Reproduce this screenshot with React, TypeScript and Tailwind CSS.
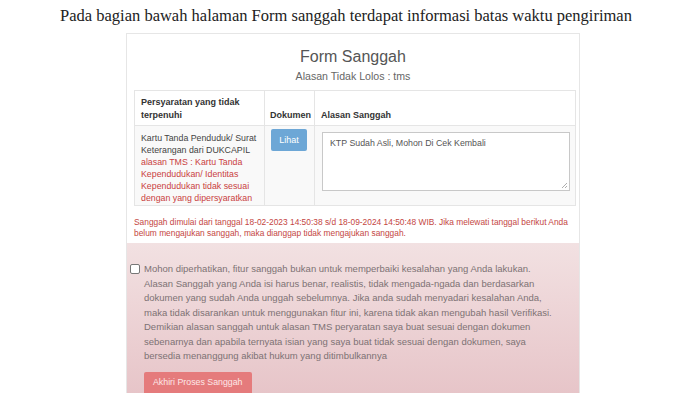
export default function App() {
  return (
    <div className="w-[700px] h-[393px] overflow-hidden bg-white font-['Liberation_Sans',Arial,sans-serif]">
      <h1 className="pt-[5px] pr-[8px] text-center font-['Liberation_Serif','Times_New_Roman',serif] text-[16.5px] leading-[22px] text-[#222]">
        Pada bagian bawah halaman Form sanggah terdapat informasi batas waktu pengiriman
      </h1>

      <div className="mx-auto mt-[6px] w-[454px] translate-x-[3px] border border-[#e6e6e6] border-b-0">
        <div className="px-[7px] pt-[13px]">
          <h2 className="text-center text-[16px] leading-[20px] text-[#555]">Form Sanggah</h2>
          <p className="mt-[2px] text-center text-[10.6px] leading-[14px] text-[#666]">Alasan Tidak Lolos : tms</p>

          <table className="mt-[7px] w-[442px] table-fixed border-collapse border border-[#e5e5e5] text-[8.8px] leading-[12px]">
            <thead>
              <tr className="bg-white">
                <th className="w-[130px] border border-[#e5e5e5] px-[6px] pt-[5px] pb-[4px] text-left align-bottom text-[9px] leading-[12.5px] font-bold text-[#333]">
                  Persyaratan yang tidak terpenuhi
                </th>
                <th className="w-[50px] border border-[#e5e5e5] px-[5px] pb-[4px] text-left align-bottom text-[9px] leading-[12.5px] font-bold text-[#333]">
                  Dokumen
                </th>
                <th className="border border-[#e5e5e5] px-[6px] pb-[4px] text-left align-bottom text-[9px] leading-[12.5px] font-bold text-[#333]">
                  Alasan Sanggah
                </th>
              </tr>
            </thead>
            <tbody>
              <tr className="bg-[#f9f9f9]">
                <td className="border border-[#e5e5e5] px-[6px] pt-[6px] pb-[1px] align-top">
                  <span className="text-[#444]">Kartu Tanda Penduduk/ Surat Keterangan dari DUKCAPIL</span>
                  <br />
                  <span className="text-[#c9413f]">
                    alasan TMS : Kartu Tanda Kependudukan/ Identitas Kependudukan tidak sesuai dengan yang dipersyaratkan
                  </span>
                </td>
                <td className="border border-[#e5e5e5] pl-[6px] pt-[3px] align-top">
                  <button className="h-[22px] w-[36px] rounded-[2px] bg-[#6da7d6] text-[9px] text-white">Lihat</button>
                </td>
                <td className="border border-[#e5e5e5] pl-[7px] pt-[6px] align-top">
                  <div className="relative h-[59px] w-[248px] border border-[#c8c8c8] bg-white px-[7px] pt-[3px] text-[8.8px] leading-[14px] text-[#555]">
                    KTP Sudah Asli, Mohon Di Cek Kembali
                    <svg className="absolute bottom-[1px] right-[1px]" width="7" height="7" viewBox="0 0 7 7">
                      <path d="M6 1 L1 6 M6 4 L4 6" stroke="#999" strokeWidth="0.8" />
                    </svg>
                  </div>
                </td>
              </tr>
            </tbody>
          </table>

          <p className="mt-[11px] w-[436px] text-[8.4px] leading-[11px] text-[#c4463f]">
            Sanggah dimulai dari tanggal 18-02-2023 14:50:38 s/d 18-09-2024 14:50:48 WIB. Jika melewati tanggal berikut Anda belum mengajukan sanggah, maka dianggap tidak mengajukan sanggah.
          </p>
        </div>

        <div className="mt-[4px] h-[160px] bg-gradient-to-b from-[#f2e1e2] to-[#e6c3c7] pl-[3px] pt-[19px]">
          <div className="flex items-start gap-[4px]">
            <span className="mt-[2px] h-[10px] w-[10px] shrink-0 rounded-[2px] border border-[#777] bg-white" />
            <p className="w-[411px] text-[9.5px] leading-[14.5px] text-[#7d7274]">
              Mohon diperhatikan, fitur sanggah bukan untuk memperbaiki kesalahan yang Anda lakukan. Alasan Sanggah yang Anda isi harus benar, realistis, tidak mengada-ngada dan berdasarkan dokumen yang sudah Anda unggah sebelumnya. Jika anda sudah menyadari kesalahan Anda, maka tidak disarankan untuk menggunakan fitur ini, karena tidak akan mengubah hasil Verifikasi. Demikian alasan sanggah untuk alasan TMS peryaratan saya buat sesuai dengan dokumen sebenarnya dan apabila ternyata isian yang saya buat tidak sesuai dengan dokumen, saya bersedia menanggung akibat hukum yang ditimbulkannya
            </p>
          </div>
          <button className="ml-[14px] mt-[8px] h-[23px] rounded-[2px] bg-[#e57b7c] px-[9px] text-[8.8px] text-[#fde8e8]">
            Akhiri Proses Sanggah
          </button>
        </div>
      </div>
    </div>
  );
}
